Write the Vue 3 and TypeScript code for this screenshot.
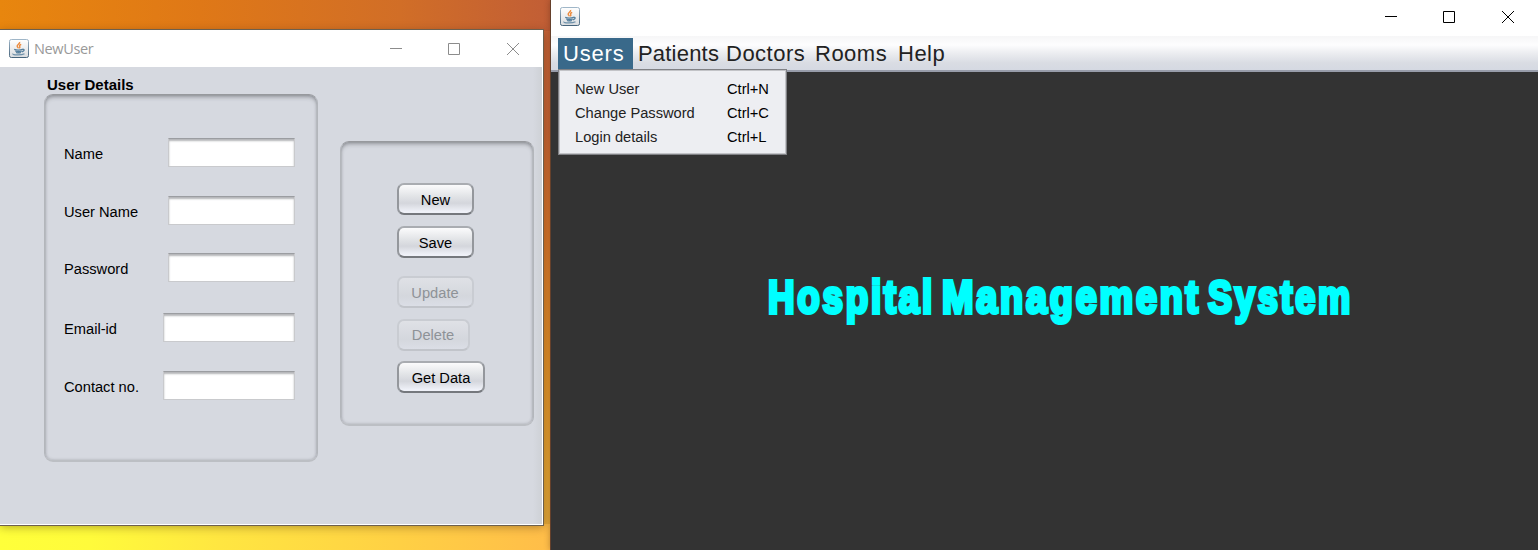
<script setup lang="ts">
interface Field { label: string; cls: string }
interface Action { label: string; cls: string; disabled: boolean }
interface Entry { label: string; keys: string }

const fields: Field[] = [
  { label: 'Name', cls: 'f-name' },
  { label: 'User Name', cls: 'f-user' },
  { label: 'Password', cls: 'f-pass' },
  { label: 'Email-id', cls: 'f-mail wide' },
  { label: 'Contact no.', cls: 'f-phone wide' },
]
const actions: Action[] = [
  { label: 'New', cls: 'a-new', disabled: false },
  { label: 'Save', cls: 'a-save', disabled: false },
  { label: 'Update', cls: 'a-update', disabled: true },
  { label: 'Delete', cls: 'a-delete', disabled: true },
  { label: 'Get Data', cls: 'a-data', disabled: false },
]
const menus: string[] = ['Users', 'Patients', 'Doctors', 'Rooms', 'Help']
const entries: Entry[] = [
  { label: 'New User', keys: 'Ctrl+N' },
  { label: 'Change Password', keys: 'Ctrl+C' },
  { label: 'Login details', keys: 'Ctrl+L' },
]
</script>

<template>
  <div class="desktop">
    <svg class="defs" width="0" height="0">
      <defs>
        <linearGradient id="jbg" x1="0" y1="0" x2="0" y2="1">
          <stop offset="0" stop-color="#fff" /><stop offset="1" stop-color="#d9dcdf" />
        </linearGradient>
        <linearGradient id="jedge" x1="0" y1="0" x2="0" y2="1">
          <stop offset="0" stop-color="#9fb6c8" /><stop offset="1" stop-color="#46647c" />
        </linearGradient>
        <symbol id="java" viewBox="0 0 20 19">
          <rect x=".5" y=".5" width="19" height="18" rx="1.8" fill="url(#jbg)" stroke="url(#jedge)" />
          <path d="M10.600 3c.7 1.700-3 2.600-2.400 4.300.2.800 1 1.200 1.300 2M12.200 5.300c-1.400.6-2.100 1.200-1.500 2.100.4.700.3 1.200-.4 1.800" fill="none" stroke="#ec8a3c" stroke-width="1.400" />
          <path d="M5.200 10.300c1.800.7 6.300.7 8.300 0M6.200 12c1.700.6 5 .6 6.500 0M7 13.500c1.400.5 3.700.5 5 0M13.500 10.300c2.400-.3 2.200 1.900-.6 2.500" fill="none" stroke="#557f9d" stroke-width="1.300" />
          <path d="M4 14.700c-1.400 1.500 8.500 1.800 11.500.1" fill="none" stroke="#6f91aa" stroke-width="1.200" />
        </symbol>
      </defs>
    </svg>

    <section class="win user-win">
      <header class="titlebar">
        <svg class="java" width="20" height="19"><use href="#java" /></svg>
        <span class="caption">NewUser</span>
        <svg class="controls" width="130" height="13" fill="none" stroke="currentColor">
          <path d="M0 5.500h12M58.500.5h11v11h-11zM117 0l12 12M129 0l-12 12" />
        </svg>
      </header>
      <div class="content">
        <div class="form-col">
          <h2>User Details</h2>
          <div class="panel form">
            <label v-for="f in fields" :key="f.label" class="row" :class="f.cls">
              <span>{{ f.label }}</span><input type="text" />
            </label>
          </div>
        </div>
        <div class="panel actions">
          <button v-for="a in actions" :key="a.label" :class="a.cls" :disabled="a.disabled">{{ a.label }}</button>
        </div>
      </div>
    </section>

    <section class="win main-win">
      <header class="titlebar">
        <svg class="java" width="20" height="19"><use href="#java" /></svg>
        <svg class="controls" width="130" height="13" fill="none" stroke="currentColor">
          <path d="M0 5.500h12M58.500.5h11v11h-11zM117 0l12 12M129 0l-12 12" />
        </svg>
      </header>
      <nav class="menubar">
        <span v-for="(m, i) in menus" :key="m" class="menu" :class="['m' + i, { open: i === 0 }]">{{ m }}</span>
      </nav>
      <main class="canvas">
        <svg class="banner" width="600" height="70">
          <text x="8" y="42.500" textLength="167" lengthAdjust="spacingAndGlyphs">Hospital</text>
          <text x="182" y="42.500" textLength="259" lengthAdjust="spacingAndGlyphs">Management</text>
          <text x="448" y="42.500" textLength="145" lengthAdjust="spacingAndGlyphs">System</text>
        </svg>
      </main>
      <div class="dropdown">
        <div v-for="e in entries" :key="e.label" class="entry"><span>{{ e.label }}</span><span class="keys">{{ e.keys }}</span></div>
      </div>
    </section>
  </div>
</template>

<style>
body { margin: 0; overflow: hidden; }
</style>

<style scoped>
* { box-sizing: border-box; }
.desktop {
  position: relative; width: 1538px; height: 550px; overflow: hidden;
  font-family: "Liberation Sans", Arial, sans-serif; font-size: 14.67px; color: #000;
  background:
    linear-gradient(90deg, #e8860e 0, #df7817 200px, #d16e27 400px, #c15e36 550px) 0 0 / 551px 31px no-repeat,
    linear-gradient(90deg, #ffff3a 0, #fffb3b 90px, #ffe641 220px, #ffd044 400px, #ffbd49 550px) 0 524px / 551px 26px no-repeat,
    linear-gradient(#c9653a, #cd6835 130px, #dc782c 230px, #e8952a 360px, #ecaa34 480px, #eab040) 543px 0 / 8px 550px no-repeat;
}
.defs { position: absolute; }
.win { position: absolute; }
.user-win {
  left: -1px; top: 30px; width: 544px; height: 495px; background: #fff;
  border-right: 1px solid #fff; box-shadow: 0 0 0 1px #6d604e, 1px 2px 9px rgba(40, 20, 0, .36);
}
.titlebar { display: flex; align-items: center; background: #fff; }
.user-win .titlebar { height: 37px; padding: 0 22px 0 10px; color: #8c8c8c; }
.user-win .controls { margin-top: 1px; }
.caption { margin-left: 5px; font: 14.5px "Open Sans", sans-serif; letter-spacing: -.35px; color: #999; }
.java { display: block; flex: none; }
.controls { margin-left: auto; display: block; flex: none; }
.content {
  display: flex; align-items: flex-start; height: 457px; padding-left: 45px;
  background: linear-gradient(90deg, #d6d9e0 0 534px, #cfd2d7 542px);
}
h2 { margin: 0; padding: 9px 0 0 3px; height: 27px; font-size: 15px; line-height: 18px; font-weight: 700; }
.panel {
  border-radius: 9px; border: 1px solid #b3b6bb; border-top-color: #97999d; border-bottom: 2px solid #bcbfc4; background: #d6d9e0;
  box-shadow: inset 0 3px 4px -1px rgba(75, 77, 82, .45), inset 0 0 3px rgba(80, 82, 88, .32);
}
.form { width: 274px; height: 368px; padding: 42px 22px 0 19px; }
.row { display: flex; justify-content: space-between; align-items: center; height: 31px; margin-bottom: 27px; }
.row span { padding-top: 3px; line-height: 18px; white-space: nowrap; }
.f-pass { margin-bottom: 29px; }
.f-user { margin-bottom: 26px; }
.row input {
  width: 127px; height: 29px; padding: 0; outline: 0; border: 1px solid #c9cacd; border-top-color: #9b9da1;
  background: #fff; box-shadow: inset 0 2px 2px #b4b5b8;
}
.row.wide input { width: 132px; }
.actions {
  display: flex; flex-direction: column; align-items: flex-start;
  width: 194px; height: 285px; margin: 74px 0 0 22px; padding: 41px 0 0 56px;
}
button {
  width: 77px; height: 32px; padding: 1px 0 0; border: 2px solid; border-color: #a9acb1 #94979c #75787d; border-radius: 7px;
  font: inherit; color: #000;
  background: linear-gradient(#fbfbfc, #e2e4e7 40%, #d4d6dc 65%, #eff1f8 95%);
}
button:disabled { color: #8e9297; padding-right: 1px; border-color: #c9ccd2 #c9ccd2 #c1c4ca; background: linear-gradient(#dfe1e6, #d4d7dd 65%, #dbdee6); }
.a-new { margin-bottom: 11px; }
.a-save { margin-bottom: 18px; }
.a-update { margin-bottom: 11px; }
.a-delete { width: 73px; margin-bottom: 10px; padding-top: 0; }
.a-data { width: 88px; }

.main-win { left: 550px; top: 0; width: 988px; height: 550px; border-left: 1px solid #65402b; box-shadow: 0 0 6px rgba(40, 20, 0, .3); background: #333; }
.main-win .titlebar { height: 36px; padding: 0 23px 3px 9px; color: #000; }
.main-win .controls { margin-top: 1px; }
.menubar {
  display: flex; height: 36px; padding: 2px 0 0 7px; border-bottom: 2px solid #989daa;
  background: linear-gradient(#f6f6f7, #fdfdfe 9px, #eeeff2 16px, #d9dce3 27px, #d5d9e2 34px);
}
.menu { height: 31px; padding-left: 5px; font-size: 22px; line-height: 31px; letter-spacing: .5px; color: #222; white-space: nowrap; }
.open { background: #39698a; color: #fff; }
.m0 { width: 75px; letter-spacing: .8px; }
.m1 { width: 88px; letter-spacing: .2px; }
.m2 { width: 89px; }
.m3 { width: 83px; }
.canvas { padding: 198px 0 0 209px; }
.banner { display: block; overflow: visible; }
.banner text {
  font-family: Impact, "Liberation Sans", sans-serif; font-weight: 700; font-size: 47px; letter-spacing: 3.5px;
  fill: #0ff; stroke: #0ff; stroke-width: 3.9px; stroke-linejoin: miter; stroke-miterlimit: 2;
}
.dropdown {
  position: absolute; left: 7px; top: 69px; width: 229px; height: 86px; padding: 7px 0 0 15px;
  border: 1px solid #808185; box-shadow: inset 0 0 0 1px #c2c3c7; background: #edeef2;
}
.entry { display: flex; height: 24px; line-height: 24px; padding-left: 1px; color: #222; }
.entry span:first-child { width: 152px; }
.keys { color: #000; }
</style>
